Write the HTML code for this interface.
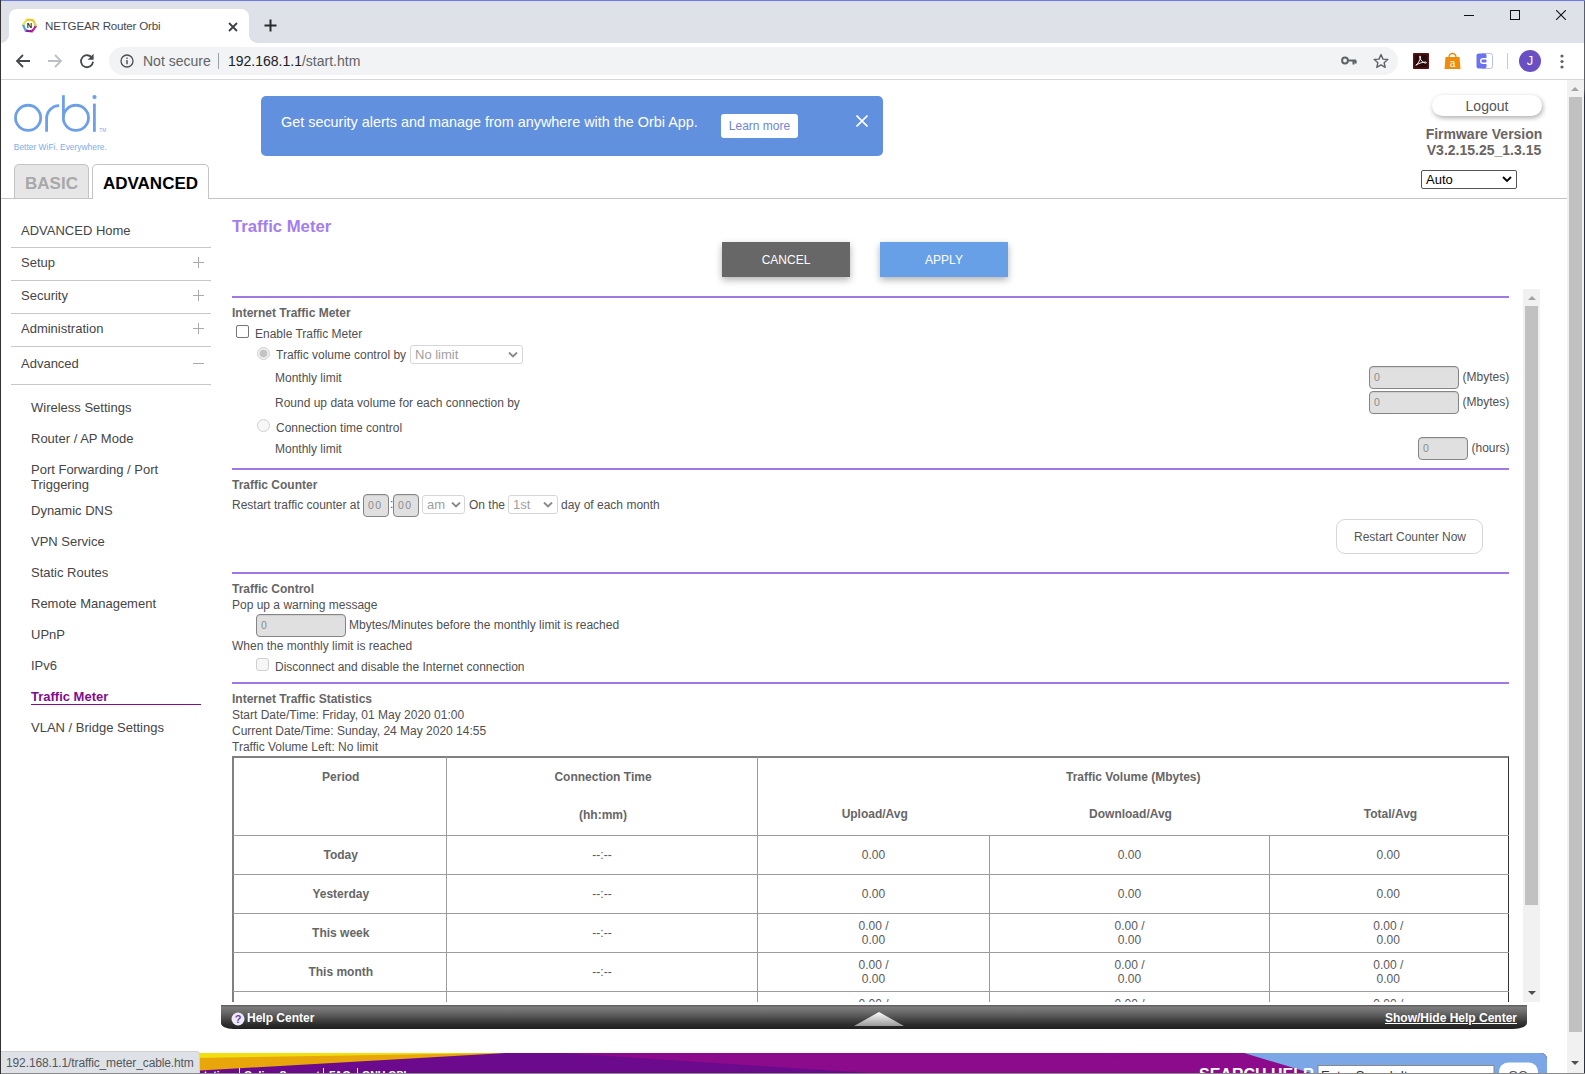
<!DOCTYPE html>
<html><head><meta charset="utf-8"><title>NETGEAR Router Orbi</title>
<style>
*{box-sizing:border-box;margin:0;padding:0}
html,body{width:1585px;height:1074px;overflow:hidden;background:#fff}
body{font-family:"Liberation Sans",Arial,sans-serif;font-size:12px;color:#404040;position:relative}
.abs{position:absolute}
/* ---------- browser chrome ---------- */
#tabbar{left:0;top:0;width:1585px;height:43px;background:#dfe1e9;border-top:1px solid #747fd0}
#tab{left:9px;top:8px;width:240px;height:34px;background:#fff;border-radius:8px 8px 0 0}
#tab .t{left:36px;top:10px;font-size:11.600px;letter-spacing:-0.200px;color:#45484d;white-space:nowrap}
#toolbar{left:0;top:43px;width:1585px;height:37px;background:#fff;border-bottom:1px solid #d5d7da}
#omni{left:109px;top:5px;width:1289px;height:28px;border-radius:14px;background:#f1f3f4}
#leftedge{left:0;top:0;width:1px;height:1074px;background:#333}
/* ---------- page ---------- */
#page{left:0;top:0;width:1568px;height:1074px;background:#fff;overflow:hidden}
#vscroll{left:1567px;top:80px;width:17px;height:994px;background:#f1f1f1}

/* header */
#logo{left:5px;top:88px}
#tagline{left:13px;top:141px;font-size:9px;color:#5b9ae6;white-space:nowrap;letter-spacing:-0.1px}
#banner{left:261px;top:96px;width:622px;height:60px;background:#6190df;border-radius:5px}
#banner .msg{left:20px;top:18px;font-size:14.4px;color:#fff;white-space:nowrap}
#learn{left:460px;top:18px;width:77px;height:24px;background:#fff;border-radius:3px;color:#6f86d6;font-size:12px;text-align:center;line-height:24px}
#logout{left:1432px;top:95px;width:110px;height:21px;border-radius:11px;background:#fff;box-shadow:1px 2px 5px rgba(0,0,0,.32);font-size:14px;color:#555;text-align:center;line-height:22px}
#fw{left:1400px;top:126px;width:168px;text-align:center;font-size:14px;font-weight:bold;color:#6a6464;line-height:16px}
#lang{left:1421px;top:170px;width:96px;height:19px;border:1px solid #555;border-radius:2px;background:#fff;font-size:13px;color:#000;line-height:17px;padding-left:4px}
#hline{left:1px;top:198px;width:1567px;height:1px;background:#c4c4c4}
.tabb{border:1px solid #c4c4c4;border-bottom:none;border-radius:5px 5px 0 0;font-weight:bold;font-size:17px;text-align:center}
#tb1{left:14px;top:164px;width:75px;height:34px;background:#e6e6e6;color:#a8a8a8;line-height:37px}
#tb2{left:92px;top:164px;width:117px;height:35px;background:#fff;color:#000;line-height:37px}
/* sidebar */
.mi{left:21px;font-size:13px;color:#454545;white-space:nowrap;line-height:16px}
.ml{left:11px;width:200px;height:1px;background:#c8c8c8}
.pm{left:193px;width:11px;height:11px}
.pm:before{content:"";position:absolute;left:0;top:5px;width:11px;height:1px;background:#aaa}
.pm.plus:after{content:"";position:absolute;left:5px;top:0;width:1px;height:11px;background:#aaa}
.si{left:31px;font-size:13px;color:#454545;white-space:nowrap;line-height:15px}

/* main */
#title{left:232px;top:218px;font-size:16.700px;font-weight:bold;color:#a47df0;white-space:nowrap;line-height:18px}
.btn{top:242px;width:128px;height:35px;color:#fff;font-size:12px;text-align:center;line-height:37px;box-shadow:0 3px 7px rgba(0,0,0,.3)}
#scrollarea{left:221px;top:290px;width:1302px;height:712px;overflow:hidden}
.pl{left:11px;width:1277px;height:2px;background:#9f78e5}
.tx{font-size:12px;color:#505050;white-space:nowrap;line-height:14px}
.b{font-weight:bold;color:#666}
.inp{background:#e0e0e0;border:1px solid #858585;border-radius:4px;height:23px;font-size:10.500px;color:#8c8c8c;padding-left:4px;line-height:20px;box-shadow:inset 0 1px 1px rgba(0,0,0,.08)}
.sel{border:1px solid #d6d6d6;border-radius:3px;height:19px;font-size:13px;color:#a0a0a0;line-height:17px;padding-left:4px;background:#fff}
.chk{width:13px;height:13px;border:1px solid #767676;border-radius:2px;background:#fff}
.rad{width:13px;height:13px;border:1px solid #d0d0d0;border-radius:50%;background:#f7f7f7}
#tblw{left:11px;top:466px;width:1277px;height:300px;border:2px solid #808080;border-right:1px solid #333;border-bottom:none}
#tbl{left:-1px;top:-1px;width:1276px;border-collapse:collapse;border-style:hidden;font-size:12px;color:#5a5a5a}
#tbl td{border:1px solid #9c9c9c;text-align:center;height:39px;padding:1px 0 0 1px;line-height:14px}
#tbl td.b{padding-left:3px}
#tbl td:last-child{padding-right:3px}
#iscroll{left:1523px;top:289px;width:17px;height:713px;background:#f1f1f1}
#help{left:221px;top:1005px;width:1306px;height:24px;border-radius:0 0 14px 12px / 0 0 6px 6px;background:linear-gradient(#5a5a5a 0,#7c7c7c 10%,#686868 32%,#484848 58%,#2c2c2c 82%,#202020 100%)}

/* scrollbars */
.thumb{background:#c1c1c1}
.arr{width:0;height:0;border-left:4px solid transparent;border-right:4px solid transparent}
/* footer */
#footer{left:1px;top:1053px;width:1546px;height:21px;overflow:hidden;background:#7ba7e6;border-radius:0 6px 0 0}
#status{left:0;top:1051px;width:200px;height:23px;background:#dee1e6;border-top:1px solid #cdd0d5;border-right:1px solid #cdd0d5;border-radius:0 4px 0 0;font-size:12px;letter-spacing:-0.120px;color:#54575c;line-height:22px;padding-left:6px;white-space:nowrap}
.ft{top:16px;font-size:10.500px;font-weight:bold;color:#fff;white-space:nowrap}
.fp{top:15px;width:1px;height:10px;background:#fff}
</style></head><body>
<div id="page" class="abs">

<svg id="logo" class="abs" width="125" height="70" viewBox="5 88 125 70">
<g fill="none" stroke="#6da0e8" stroke-width="2.8">
<circle cx="28.1" cy="117.85" r="12.6"/>
<path d="M46.6 131.8V118.5A12.7 12.7 0 0 1 59.2 105.7"/>
<path d="M63.4 95.2V117.85"/>
<circle cx="75.9" cy="117.85" r="12.6"/>
<path d="M94.4 103.6V131.8"/>
</g>
<circle cx="94.5" cy="97.1" r="2.1" fill="#6da0e8"/>
<text x="99.3" y="131.6" font-family="Liberation Sans, sans-serif" font-size="4.8" fill="#7fabea">TM</text>
<text x="13.8" y="150.2" font-family="Liberation Sans, sans-serif" font-size="8.8" fill="#82abe8" textLength="93" lengthAdjust="spacingAndGlyphs">Better WiFi. Everywhere.</text>
</svg>
<div id="banner" class="abs"><span class="msg abs">Get security alerts and manage from anywhere with the Orbi App.</span>
<div id="learn" class="abs">Learn more</div>
<svg class="abs" style="left:595px;top:19px" width="12" height="12" viewBox="0 0 12 12"><path d="M0.5 0.5L11.5 11.5M11.5 0.5L0.5 11.5" stroke="#fff" stroke-width="1.6" fill="none"/></svg>
</div>
<div id="logout" class="abs">Logout</div>
<div id="fw" class="abs">Firmware Version<br>V3.2.15.25_1.3.15</div>
<div id="lang" class="abs">Auto<svg class="abs" style="left:80px;top:5px" width="10" height="7" viewBox="0 0 10 7"><path d="M1 1l4 4 4-4" stroke="#000" stroke-width="1.8" fill="none"/></svg></div>
<div id="hline" class="abs"></div>
<div id="tb1" class="abs tabb">BASIC</div>
<div id="tb2" class="abs tabb">ADVANCED</div>

<div class="abs mi" style="top:223px">ADVANCED Home</div><div class="abs ml" style="top:247px"></div>
<div class="abs mi" style="top:255px">Setup</div><div class="abs pm plus" style="top:257px"></div><div class="abs ml" style="top:280px"></div>
<div class="abs mi" style="top:288px">Security</div><div class="abs pm plus" style="top:290px"></div><div class="abs ml" style="top:313px"></div>
<div class="abs mi" style="top:321px">Administration</div><div class="abs pm plus" style="top:323px"></div><div class="abs ml" style="top:346px"></div>
<div class="abs mi" style="top:356px">Advanced</div><div class="abs pm" style="top:358px"></div><div class="abs ml" style="top:384px"></div>
<div class="abs si" style="top:400px">Wireless Settings</div>
<div class="abs si" style="top:431px">Router / AP Mode</div>
<div class="abs si" style="top:462px">Port Forwarding / Port<br>Triggering</div>
<div class="abs si" style="top:503px">Dynamic DNS</div>
<div class="abs si" style="top:534px">VPN Service</div>
<div class="abs si" style="top:565px">Static Routes</div>
<div class="abs si" style="top:596px">Remote Management</div>
<div class="abs si" style="top:627px">UPnP</div>
<div class="abs si" style="top:658px">IPv6</div>
<div class="abs si" style="top:689px;color:#800d8c;font-weight:bold">Traffic Meter</div>
<div class="abs" style="left:31px;top:704px;width:170px;height:1px;background:#800d8c"></div>
<div class="abs si" style="top:720px">VLAN / Bridge Settings</div>

<div id="title" class="abs">Traffic Meter</div>
<div class="abs btn" style="left:722px;background:#676767">CANCEL</div>
<div class="abs btn" style="left:880px;background:#68a0e8">APPLY</div>
<div id="scrollarea" class="abs">
<!-- coordinates inside: x-221, y-290 -->
<div class="abs pl" style="top:6px"></div>
<div class="abs tx b" style="left:11px;top:16px">Internet Traffic Meter</div>
<div class="abs chk" style="left:15px;top:35px"></div>
<div class="abs tx" style="left:34px;top:37px">Enable Traffic Meter</div>
<div class="abs rad" style="left:36px;top:57px;background:radial-gradient(#c4c4c4 0 3.500px,#efefef 4.200px)"></div>
<div class="abs tx" style="left:55px;top:58px">Traffic volume control by</div>
<div class="abs sel" style="left:189px;top:55px;width:113px">No limit<svg class="abs" style="left:97px;top:6px" width="10" height="6" viewBox="0 0 10 6"><path d="M1 0.5l4 4 4-4" stroke="#8a8a8a" stroke-width="1.900" fill="none"/></svg></div>
<div class="abs tx" style="left:54px;top:81px">Monthly limit</div>
<div class="abs inp" style="left:1148px;top:76px;width:90px">0</div><div class="abs tx" style="left:1241.500px;top:80px">(Mbytes)</div>
<div class="abs tx" style="left:54px;top:106px">Round up data volume for each connection by</div>
<div class="abs inp" style="left:1148px;top:101px;width:90px">0</div><div class="abs tx" style="left:1241.500px;top:105px">(Mbytes)</div>
<div class="abs rad" style="left:36px;top:129px"></div>
<div class="abs tx" style="left:55px;top:131px">Connection time control</div>
<div class="abs tx" style="left:54px;top:152px">Monthly limit</div>
<div class="abs inp" style="left:1197px;top:147px;width:50px">0</div><div class="abs tx" style="left:1250.500px;top:151px">(hours)</div>
<div class="abs pl" style="top:178px"></div>
<div class="abs tx b" style="left:11px;top:188px">Traffic Counter</div>
<div class="abs tx" style="left:11px;top:208px">Restart traffic counter at</div>
<div class="abs inp" style="left:142px;top:204px;width:26px;padding-left:4px;letter-spacing:1.500px">00</div>
<div class="abs tx" style="left:169px;top:207px">:</div>
<div class="abs inp" style="left:172px;top:204px;width:26px;padding-left:4px;letter-spacing:1.500px">00</div>
<div class="abs sel" style="left:201px;top:205px;width:43px">am<svg class="abs" style="left:28px;top:6px" width="10" height="6" viewBox="0 0 10 6"><path d="M1 0.5l4 4 4-4" stroke="#8a8a8a" stroke-width="1.900" fill="none"/></svg></div>
<div class="abs tx" style="left:248px;top:208px">On the</div>
<div class="abs sel" style="left:287px;top:205px;width:50px">1st<svg class="abs" style="left:34px;top:6px" width="10" height="6" viewBox="0 0 10 6"><path d="M1 0.5l4 4 4-4" stroke="#8a8a8a" stroke-width="1.900" fill="none"/></svg></div>
<div class="abs tx" style="left:340px;top:208px">day of each month</div>
<div class="abs tx" style="left:1115px;top:229px;width:147px;height:35px;border:1px solid #d6d6d6;border-radius:9px;text-align:center;line-height:35px;padding-left:1px;color:#555">Restart Counter Now</div>
<div class="abs pl" style="top:282px"></div>
<div class="abs tx b" style="left:11px;top:292px">Traffic Control</div>
<div class="abs tx" style="left:11px;top:308px">Pop up a warning message</div>
<div class="abs inp" style="left:35px;top:324px;width:90px">0</div>
<div class="abs tx" style="left:128px;top:328px">Mbytes/Minutes before the monthly limit is reached</div>
<div class="abs tx" style="left:11px;top:349px">When the monthly limit is reached</div>
<div class="abs chk" style="left:35px;top:368px;border-color:#cfcfcf;background:#f6f6f6;border-radius:3px"></div>
<div class="abs tx" style="left:54px;top:370px">Disconnect and disable the Internet connection</div>
<div class="abs pl" style="top:392px"></div>
<div class="abs tx b" style="left:11px;top:402px">Internet Traffic Statistics</div>
<div class="abs tx" style="left:11px;top:418px">Start Date/Time: Friday, 01 May 2020 01:00</div>
<div class="abs tx" style="left:11px;top:434px">Current Date/Time: Sunday, 24 May 2020 14:55</div>
<div class="abs tx" style="left:11px;top:450px">Traffic Volume Left: No limit</div>
<div id="tblw" class="abs"><table id="tbl" class="abs">
<colgroup><col style="width:213px"><col style="width:311px"><col style="width:232px"><col style="width:280px"><col style="width:240px"></colgroup>
<tr style="height:39px"><td rowspan="2" class="b" style="vertical-align:top;padding-top:11px;line-height:19px">Period</td><td rowspan="2" class="b" style="vertical-align:top;padding-top:11px;line-height:19px">Connection Time<br><br>(hh:mm)</td><td colspan="3" class="b" style="border-bottom:none">Traffic Volume (Mbytes)</td></tr>
<tr style="height:39px"><td class="b" style="border:none;padding:0 0 2px 3px">Upload/Avg</td><td class="b" style="border:none;padding:0 0 2px 3px">Download/Avg</td><td class="b" style="border:none;padding:0 0 2px 3px">Total/Avg</td></tr>
<tr><td class="b">Today</td><td>--:--</td><td>0.00</td><td>0.00</td><td>0.00</td></tr>
<tr><td class="b">Yesterday</td><td>--:--</td><td>0.00</td><td>0.00</td><td>0.00</td></tr>
<tr><td class="b">This week</td><td>--:--</td><td>0.00 /<br>0.00</td><td>0.00 /<br>0.00</td><td>0.00 /<br>0.00</td></tr>
<tr><td class="b">This month</td><td>--:--</td><td>0.00 /<br>0.00</td><td>0.00 /<br>0.00</td><td>0.00 /<br>0.00</td></tr>
<tr><td class="b">Last month</td><td>--:--</td><td>0.00 /<br>0.00</td><td>0.00 /<br>0.00</td><td>0.00 /<br>0.00</td></tr>
</table></div>
</div>
<div id="iscroll" class="abs">
<div class="abs arr" style="left:5px;top:7px;border-bottom:4px solid #a3a3a3"></div>
<div class="abs thumb" style="left:2px;top:17px;width:13px;height:599px"></div>
<div class="abs arr" style="left:5px;top:702px;border-top:4px solid #505050"></div>
</div>
<div id="help" class="abs">
<svg class="abs" style="left:9.500px;top:6.500px" width="14" height="14" viewBox="0 0 14 14"><circle cx="7" cy="7" r="6.500" fill="#efeaf9"/><text x="7" y="11" font-family="Liberation Sans, sans-serif" font-weight="bold" font-size="11" fill="#6a3fb0" text-anchor="middle">?</text></svg>
<span class="abs" style="left:26px;top:6px;font-size:12px;font-weight:bold;color:#fff;white-space:nowrap;line-height:14px">Help Center</span>
<svg class="abs" style="left:631px;top:6px" width="54" height="16" viewBox="0 0 54 16"><defs><linearGradient id="tg" x1="0" y1="0" x2="0" y2="1"><stop offset="0" stop-color="#fff"/><stop offset="1" stop-color="#9a9a9a"/></linearGradient></defs><path d="M27 1L52 15H2z" fill="url(#tg)"/></svg>
<span class="abs" style="right:10px;top:6px;font-size:12px;font-weight:bold;color:#fff;white-space:nowrap;text-decoration:underline;line-height:14px">Show/Hide Help Center</span>
</div>

<div id="footer" class="abs">
<svg class="abs" style="left:0;top:0" width="1546" height="22" viewBox="0 0 1546 22">
<rect x="0" y="0" width="1546" height="22" fill="#6b0a8c"/>
<path d="M560 0H1260L1340 22H900z" fill="#8c0a8c"/>
<path d="M1100 0H1300V22H1180z" fill="#8c0a8c"/>
<path d="M0 0H505L0 29z" fill="#e8a60a"/>
<path d="M0 0H500L0 8z" fill="#f0e010"/>
<path d="M1243 0H1541a5 5 0 0 1 5 5V22H1316z" fill="#7ba7e6"/>
<rect x="1317" y="12.500" width="176" height="12" fill="#fff" stroke="#888" stroke-width="1"/>
<rect x="1498" y="9.500" width="39" height="20" rx="9" fill="#fff"/>
</svg>
<span class="abs ft" style="left:155px">Documentation</span><span class="abs fp" style="left:238px"></span>
<span class="abs ft" style="left:243px">Online Support</span><span class="abs fp" style="left:322px"></span>
<span class="abs ft" style="left:328px">FAQ</span><span class="abs fp" style="left:356px"></span>
<span class="abs ft" style="left:361px">GNU GPL</span>
<span class="abs" style="left:1198px;top:13px;font-size:16px;font-weight:bold;color:#fff;white-space:nowrap">SEARCH HELP</span>
<span class="abs" style="left:1320px;top:15px;font-size:13px;color:#333;white-space:nowrap">Enter Search Item</span>
<span class="abs" style="left:1507px;top:15px;font-size:13px;color:#555;white-space:nowrap">GO</span>
</div>
<div id="status" class="abs">192.168.1.1/traffic_meter_cable.htm</div>



</div>
<div id="tabbar" class="abs">
  <div class="abs" style="left:1px;top:34px;width:8px;height:8px;background:radial-gradient(circle at 0 0,transparent 7.5px,#fff 8px)"></div>
  <div class="abs" style="left:249px;top:34px;width:8px;height:8px;background:radial-gradient(circle at 100% 0,transparent 7.5px,#fff 8px)"></div>
  <div id="tab" class="abs">
    <svg class="abs" style="left:12px;top:7.500px" width="17" height="17" viewBox="-0.500 -0.500 17 17">
      <g transform="rotate(6 8 8)">
      <path d="M0.300 8L4.150 1.330L8 8z" fill="#e8e24a"/><path d="M4.150 1.330H11.850L8 8z" fill="#f2c418"/><path d="M11.850 1.330L15.700 8L8 8z" fill="#d8d040"/><path d="M15.700 8L11.850 14.670L8 8z" fill="#c0208c"/><path d="M11.850 14.670H4.150L8 8z" fill="#8a1a9a"/><path d="M4.150 14.670L0.300 8L8 8z" fill="#5a9ae6"/>
      </g>
      <circle cx="8" cy="8" r="4.700" fill="#fff"/>
      <text x="8" y="10.800" font-family="Liberation Sans, sans-serif" font-weight="bold" font-size="7.500" fill="#222" text-anchor="middle">N</text>
    </svg>
    <span class="t abs">NETGEAR Router Orbi</span>
    <svg class="abs" style="left:219px;top:13px" width="10" height="10" viewBox="0 0 10 10"><path d="M1 1l8 8M9 1l-8 8" stroke="#3c4043" stroke-width="1.800" fill="none"/></svg>
  </div>
  <svg class="abs" style="left:264px;top:18px" width="13" height="13" viewBox="0 0 13 13"><path d="M6.5 0.5v12M0.5 6.5h12" stroke="#2a2a2a" stroke-width="2" fill="none"/></svg>
  <div class="abs" style="left:1464px;top:14px;width:10px;height:1px;background:#111"></div>
  <div class="abs" style="left:1510px;top:9px;width:10px;height:10px;border:1px solid #111"></div>
  <svg class="abs" style="left:1556px;top:9px" width="10" height="10" viewBox="0 0 10 10"><path d="M0 0l10 10M10 0L0 10" stroke="#111" stroke-width="1.100" fill="none"/></svg>
  <div class="abs" style="left:0;top:0;width:1585px;height:1px;background:#d6daf4"></div>
</div>
<div id="toolbar" class="abs"><div class="abs" style="left:0;top:-1px">
  <svg class="abs" style="left:15px;top:11px" width="16" height="16" viewBox="0 0 16 16"><path d="M15 8H2.5M8 2L2 8l6 6" stroke="#45484c" stroke-width="1.8" fill="none"/></svg>
  <svg class="abs" style="left:47px;top:11px" width="16" height="16" viewBox="0 0 16 16"><path d="M1 8h12.5M8 2l6 6-6 6" stroke="#bcc0c4" stroke-width="1.8" fill="none"/></svg>
  <svg class="abs" style="left:79px;top:11px" width="16" height="16" viewBox="0 0 16 16"><path d="M13.2 5.2A6 6 0 1 0 14 8.6" stroke="#45484c" stroke-width="1.8" fill="none"/><path d="M14.600 0.800v6h-6z" fill="#45484c"/></svg>
  <div id="omni" class="abs">
    <svg class="abs" style="left:11px;top:7px" width="14" height="14" viewBox="0 0 14 14"><circle cx="7" cy="7" r="6" fill="none" stroke="#4a4d51" stroke-width="1.3"/><rect x="6.3" y="6" width="1.4" height="4.2" fill="#4a4d51"/><rect x="6.3" y="3.5" width="1.4" height="1.4" fill="#4a4d51"/></svg>
    <span class="abs" style="left:34px;top:6px;font-size:14px;color:#5f6368;white-space:nowrap;line-height:16px">Not secure</span>
    <div class="abs" style="left:109px;top:6px;width:1px;height:16px;background:#9aa0a6"></div>
    <span class="abs" style="left:119px;top:6px;font-size:14px;color:#202124;white-space:nowrap;line-height:16px">192.168.1.1<span style="color:#5f6368">/start.htm</span></span>
    <svg class="abs" style="left:1232px;top:9px" width="16" height="10" viewBox="0 0 16 10"><circle cx="4" cy="4.5" r="2.9" fill="none" stroke="#5f6368" stroke-width="2"/><path d="M7 4.5h8M12.5 4.5v4M14.7 4.5v3" stroke="#5f6368" stroke-width="2" fill="none"/></svg>
    <svg class="abs" style="left:1264px;top:6px" width="16" height="16" viewBox="0 0 16 16"><path d="M8 1.6l2 4.5 4.8.4-3.7 3.2 1.1 4.7L8 11.9l-4.2 2.5 1.1-4.7L1.2 6.5 6 6.1z" fill="none" stroke="#5f6368" stroke-width="1.4" stroke-linejoin="round"/></svg>
  </div>
  <svg class="abs" style="left:1413px;top:11px" width="16" height="16" viewBox="0 0 17 17"><rect width="17" height="17" rx="1" fill="#3a0d0d"/><rect x="1" y="1" width="15" height="15" fill="#2a0b0b" stroke="#8a1c1c" stroke-width=".8"/><path d="M3 13c2-1 4.5-5 5-9 .2-1.2-1.2-1.2-1 0 .6 3.5 3.5 6.5 6.5 6.8 1 0 1-1.2 0-1.2-3 0-7 1.200-10.500 3.400z" fill="none" stroke="#fff" stroke-width="1"/></svg>
  <svg class="abs" style="left:1444px;top:10px" width="17" height="18" viewBox="0 0 17 18"><path d="M5 5a3.500 3.500 0 0 1 7 0" stroke="#e8890c" stroke-width="1.3" fill="none"/><path d="M1.500 5h14l1 12H0.500z" fill="#ef8d0b"/><text x="8.500" y="14.500" font-family="Liberation Sans, sans-serif" font-size="10" fill="#fff" text-anchor="middle">a</text></svg>
  <svg class="abs" style="left:1476px;top:11px" width="17" height="16" viewBox="0 0 17 16"><rect x="5" y="0.500" width="11.500" height="15" rx="2" fill="#fff" stroke="#b8bfe8" stroke-width="1"/><rect x="0.500" y="0.500" width="10" height="15" rx="2" fill="#6a72ee"/><rect x="4" y="5" width="9" height="6" rx="3" fill="#fff"/><rect x="5.500" y="6.500" width="5" height="3" rx="1" fill="#6a72ee"/></svg>
  <div class="abs" style="left:1507px;top:11px;width:1px;height:16px;background:#c8cacd"></div>
  <div class="abs" style="left:1519px;top:8px;width:22px;height:22px;border-radius:50%;background:#6a4ec4;color:#fff;font-size:13px;text-align:center;line-height:22px">J</div>
  <svg class="abs" style="left:1560px;top:12px" width="4" height="15" viewBox="0 0 4 15"><circle cx="2" cy="2" r="1.600" fill="#5f6368"/><circle cx="2" cy="7.500" r="1.600" fill="#5f6368"/><circle cx="2" cy="13" r="1.600" fill="#5f6368"/></svg>
</div></div>
<div id="vscroll" class="abs">
<div class="abs arr" style="left:4px;top:7px;border-bottom:4px solid #a3a3a3"></div>
<div class="abs thumb" style="left:2px;top:17px;width:13px;height:935px"></div>
<div class="abs arr" style="left:4px;top:981px;border-top:4px solid #505050"></div>
</div>
<div class="abs" style="left:1584px;top:1px;width:1px;height:1073px;background:linear-gradient(#5a5e68 0,#5a5e68 88px,#2a3044 96px,#2a3044 100%)"></div>
<div class="abs" style="left:0;top:1073px;width:1585px;height:1px;background:#8a8a8a"></div>
<div id="leftedge" class="abs"></div>
</body></html>
